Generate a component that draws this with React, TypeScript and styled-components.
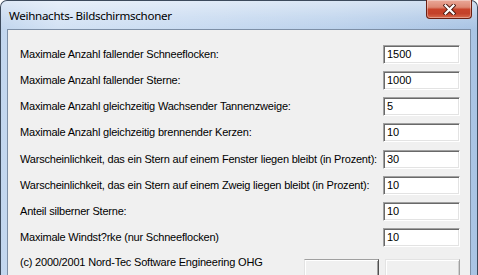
import React from "react";
import styled, { createGlobalStyle } from "styled-components";

const Global = createGlobalStyle`
  html, body { margin: 0; padding: 0; overflow: hidden; background: #ffffff; }
  body { width: 478px; height: 275px; }
`;

const Window = styled.div`
  box-sizing: border-box;
  width: 478px;
  height: 320px;
  border: 1px solid #3c4a5c;
  border-bottom: none;
  border-radius: 7px 7px 0 0;
  padding: 0 6px;
  display: flex;
  flex-direction: column;
  background: linear-gradient(90deg, #c2d6ee 0%, #d3e2f4 12%, #c9dbf1 40%, #bcd2ec 70%, #a9c4e4 100%);
`;

const TitleBar = styled.div`
  height: 28px;
  display: flex;
  align-items: flex-start;
  justify-content: space-between;
  margin: 0 -6px;
  padding: 0 5px 0 8px;
  border-radius: 6px 6px 0 0;
  background: linear-gradient(180deg, rgba(255,255,255,0.45) 0%, rgba(255,255,255,0.15) 60%, rgba(255,255,255,0) 100%);
`;

const Title = styled.span`
  font-family: "Noto Sans", "Open Sans", sans-serif;
  font-size: 11.6px;
  line-height: 16px;
  margin-top: 7px;
  color: #000000;
  letter-spacing: -0.3px;
`;

const CloseButton = styled.div`
  box-sizing: border-box;
  width: 46px;
  height: 19px;
  margin-top: -1px;
  border: 1px solid #6b1f12;
  border-top: none;
  border-radius: 0 0 4px 4px;
  display: flex;
  align-items: center;
  justify-content: center;
  background: linear-gradient(180deg, #eaa898 0%, #dd8873 40%, #c8432a 52%, #c3412a 75%, #d86a4c 100%);
  box-shadow: inset 0 0 0 1px rgba(255,255,255,0.35);
`;

const Client = styled.div`
  flex: 1;
  border: 1px solid #7d8fa6;
  border-bottom: none;
  background: #f0f0f0;
  padding: 15px 10px 0 12px;
  display: flex;
  flex-direction: column;
  gap: 7px;
`;

const Row = styled.div<{ $extra?: number }>`
  height: 19px;
  display: flex;
  align-items: center;
  justify-content: space-between;
  margin-top: ${(p) => p.$extra ?? 0}px;
`;

const Label = styled.span`
  font-family: "Liberation Sans", Arial, sans-serif;
  font-size: 11px;
  letter-spacing: -0.2px;
  line-height: 13px;
  color: #000000;
  white-space: nowrap;
`;

const Field = styled.div`
  box-sizing: border-box;
  width: 77px;
  height: 19px;
  background: #ffffff;
  border: 1px solid;
  border-color: #a0a0a0 #ffffff #ffffff #a0a0a0;
  box-shadow: inset 1px 1px 0 #696969, inset -1px -1px 0 #e3e3e3;
  padding: 2px 0 0 3px;
  font-family: "Liberation Sans", Arial, sans-serif;
  font-size: 11px;
  line-height: 13px;
  color: #000000;
`;

const Footer = styled.div`
  display: flex;
  align-items: flex-start;
  margin-top: 2px;
`;

const Copyright = styled(Label)`
  flex: 1;
`;

const Buttons = styled.div`
  display: flex;
  gap: 6px;
  margin-top: 3px;
`;

const Button = styled.div<{ $dim?: boolean }>`
  box-sizing: border-box;
  width: 75px;
  height: 23px;
  background: #f0f0f0;
  border: 1px solid;
  border-color: ${(p) =>
    p.$dim ? "#e3e3e3 #a0a0a0 #a0a0a0 #e3e3e3" : "#a0a0a0 #505050 #505050 #e3e3e3"};
  box-shadow: ${(p) =>
    p.$dim
      ? "inset 1px 1px 0 #ffffff, inset -1px -1px 0 #d0d0d0"
      : "inset 1px 1px 0 #ffffff, inset -1px -1px 0 #a0a0a0"};
`;

const rows: [string, string][] = [
  ["Maximale Anzahl fallender Schneeflocken:", "1500"],
  ["Maximale Anzahl fallender Sterne:", "1000"],
  ["Maximale Anzahl gleichzeitig Wachsender Tannenzweige:", "5"],
  ["Maximale Anzahl gleichzeitig brennender Kerzen:", "10"],
  ["Warscheinlichkeit, das ein Stern auf einem Fenster liegen bleibt (in Prozent):", "30"],
  ["Warscheinlichkeit, das ein Stern auf einem Zweig liegen bleibt (in Prozent):", "10"],
  ["Anteil silberner Sterne:", "10"],
  ["Maximale Windst?rke (nur Schneeflocken)", "10"],
];

export default function App() {
  return (
    <>
      <Global />
      <Window>
        <TitleBar>
          <Title>Weihnachts- Bildschirmschoner</Title>
          <CloseButton>
            <svg width="13" height="11" viewBox="0 0 13 11">
              <path d="M2.5 1.5 L10.5 9.5 M10.5 1.5 L2.5 9.5" stroke="#4a1a12" strokeWidth="4" strokeLinecap="square" />
              <path d="M2.5 1.5 L10.5 9.5 M10.5 1.5 L2.5 9.5" stroke="#ffffff" strokeWidth="2.2" strokeLinecap="square" />
            </svg>
          </CloseButton>
        </TitleBar>
        <Client>
          {rows.map(([label, value], i) => (
            <Row key={i} $extra={i === 4 ? 1 : 0}>
              <Label>{label}</Label>
              <Field>{value}</Field>
            </Row>
          ))}
          <Footer>
            <Copyright>(c) 2000/2001 Nord-Tec Software Engineering OHG</Copyright>
            <Buttons>
              <Button />
              <Button $dim />
            </Buttons>
          </Footer>
        </Client>
      </Window>
    </>
  );
}
